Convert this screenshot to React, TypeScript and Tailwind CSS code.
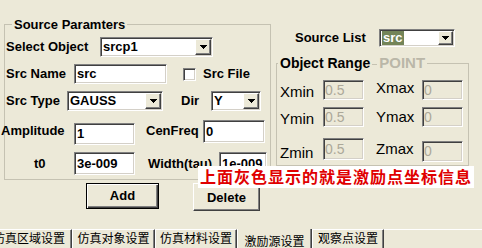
const sunken =
  "border border-t-[#808080] border-l-[#808080] border-r-white border-b-white shadow-[inset_1px_1px_0_#404040,inset_-1px_-1px_0_#d4d0c8]";
const raised =
  "border border-t-white border-l-white border-r-[#404040] border-b-[#404040] shadow-[inset_-1px_-1px_0_#808080]";

function Arrow() {
  return (
    <svg width="7" height="4" viewBox="0 0 7 4">
      <path d="M0 0h7v1h-1v1h-1v1h-1v1h-1v-1h-1v-1h-1v-1h-1z" fill="#000" />
    </svg>
  );
}

function Combo({ value, className = "", selected = false, btn = "w-[16px]" }: { value: string; className?: string; selected?: boolean; btn?: string }) {
  return (
    <div className={`${sunken} bg-white flex p-[1px] ${className}`}>
      <div className="flex-1 flex items-center pl-[1px] overflow-hidden whitespace-nowrap">
        {selected ? <span className="bg-[#738458] text-white px-[1px] leading-[14px]">{value}</span> : value}
      </div>
      <div className={`${raised} bg-[#ece9d8] ${btn} flex items-center justify-center`}>
        <Arrow />
      </div>
    </div>
  );
}

function TextBox({ value, className = "", disabled = false }: { value: string; className?: string; disabled?: boolean }) {
  return (
    <div
      className={`${sunken} ${
        disabled ? "bg-[#ece9d8] text-[#aca899] font-normal text-[14px] pl-[1px]" : "bg-white pl-[2px]"
      } flex items-center overflow-hidden whitespace-nowrap ${className}`}
    >
      {value}
    </div>
  );
}

function RangeLabel({ text, className = "" }: { text: string; className?: string }) {
  return <span className={`text-[15px] font-normal leading-[17px] ${className}`}>{text}</span>;
}

export default function App() {
  return (
    <div className="w-[482px] h-[248px] bg-[#ece9d8] relative overflow-hidden flex flex-col font-['Liberation_Sans','Noto_Sans_CJK_SC',Arial,sans-serif] text-[13px] font-bold text-black">
      <div className="h-[229px] flex">
        {/* left column */}
        <div className="ml-[4px] mt-[17px] w-[267px] flex flex-col">
          <fieldset className="border border-[#c5c2b2] m-0 p-0 pb-[4px] min-w-0">
            <legend className="ml-[7px] px-[2px] leading-[15px]">Source Paramters</legend>

            <div className="flex items-center h-[20px] mt-[5px]">
              <span className="w-[95px] pl-[1px] mb-[1px]">Select Object</span>
              <Combo value="srcp1" className="w-[113px] h-[20px]" />
            </div>

            <div className="flex items-center h-[20px] mt-[7px]">
              <span className="w-[69px] pl-[1px] mb-[1px]">Src Name</span>
              <TextBox value="src" className="w-[93px] h-[20px]" />
              <div className={`${sunken} bg-white w-[13px] h-[13px] ml-[16px]`} />
              <span className="ml-[7px] mb-[1px]">Src File</span>
            </div>

            <div className="flex items-center h-[20px] mt-[7px]">
              <span className="w-[62px] pl-[1px] mb-[1px]">Src Type</span>
              <Combo value="GAUSS" className="w-[96px] h-[20px]" />
              <span className="ml-[18px] w-[30px] mb-[1px]">Dir</span>
              <Combo value="Y" className="w-[50px] h-[20px]" />
            </div>

            <div className="flex items-center h-[25px] mt-[9px]">
              <span className="ml-[-4px] w-[73px] mb-[3px]">Amplitude</span>
              <TextBox value="1" className="self-end w-[61px] h-[22px]" />
              <span className="ml-[11px] w-[57px] mb-[3px]">CenFreq</span>
              <TextBox value="0" className="self-start w-[62px] h-[23px]" />
            </div>

            <div className="flex items-center h-[23px] mt-[7px]">
              <span className="w-[69px] pl-[29px]">t0</span>
              <TextBox value="3e-009" className="w-[61px] h-[23px]" />
              <span className="ml-[13px] w-[71px] whitespace-nowrap">Width(tau)</span>
              <TextBox value="1e-009" className="w-[48px] h-[23px]" />
            </div>
          </fieldset>

          <div className="flex items-start mt-[3px]">
            <button className="ml-[82px] w-[73px] h-[26px] bg-[#ece9d8] border border-black shadow-[inset_1px_1px_0_#fff,inset_-1px_-1px_0_#404040,inset_-2px_-2px_0_#808080] font-bold">
              Add
            </button>
            <button className={`ml-[34px] w-[67px] h-[28px] bg-[#ece9d8] ${raised} font-bold pt-[2px]`}>Delete</button>
          </div>
        </div>

        {/* right column */}
        <div className="ml-[5px] w-[193px] flex flex-col">
          <div className="flex items-center h-[18px] mt-[29px]">
            <span className="w-[103px] pl-[19px]">Source List</span>
            <Combo value="src" selected className="w-[76px] h-[18px]" btn="w-[15px]" />
          </div>

          <fieldset className="border border-[#c5c2b2] m-0 p-0 pb-[3px] mt-[8px] min-w-0">
            <legend className="ml-[1px] px-[2px] leading-[16px] text-[14px]">
              <span>Object Range</span>
              <span className="inline-block w-[5px] h-px bg-[#c5c2b2] mx-[2px] align-middle" />
              <span className="text-[15px] text-[#bab7a8]">POINT</span>
            </legend>

            <div className="flex items-start h-[20px] mt-[9px]">
              <RangeLabel text="Xmin" className="w-[46px] pl-[3px] mt-[3px]" />
              <TextBox value="0.5" disabled className="w-[41px] h-[20px]" />
              <RangeLabel text="Xmax" className="ml-[12px] w-[46px] mt-[-1px]" />
              <TextBox value="0" disabled className="w-[41px] h-[20px]" />
            </div>

            <div className="flex items-start h-[20px] mt-[7px]">
              <RangeLabel text="Ymin" className="w-[46px] pl-[3px] mt-[3px]" />
              <TextBox value="0.5" disabled className="w-[41px] h-[20px]" />
              <RangeLabel text="Ymax" className="ml-[12px] w-[46px] mt-[1px]" />
              <TextBox value="0" disabled className="w-[41px] h-[20px]" />
            </div>

            <div className="flex items-start mt-[11px]">
              <RangeLabel text="Zmin" className="w-[46px] pl-[3px] mt-[6px]" />
              <TextBox value="0.5" disabled className="w-[41px] h-[22px]" />
              <RangeLabel text="Zmax" className="ml-[12px] w-[46px] mt-[2px]" />
              <TextBox value="0" disabled className="w-[41px] h-[21px] mt-[3px]" />
            </div>
          </fieldset>
        </div>
      </div>

      {/* tabs along the bottom */}
      <div className="h-[19px] flex items-stretch font-normal text-[12px] font-['Noto_Sans_CJK_SC',sans-serif]">
        <div className="w-[72px] flex items-center justify-end pr-[6px] pb-[2px] overflow-hidden whitespace-nowrap leading-[16px] border-t border-t-white border-r border-r-[#404040] shadow-[inset_-1px_0_0_#808080]">
          仿真区域设置
        </div>
        <div className="w-[83px] flex items-center justify-center pb-[2px] whitespace-nowrap leading-[16px] border-t border-t-white border-l border-l-white border-r border-r-[#404040] shadow-[inset_-1px_0_0_#808080]">
          仿真对象设置
        </div>
        <div className="w-[82px] flex items-center justify-center pb-[2px] whitespace-nowrap leading-[16px] border-t border-t-white border-l border-l-white border-r border-r-[#404040] shadow-[inset_-1px_0_0_#808080]">
          仿真材料设置
        </div>
        <div className="w-[75px] flex items-start justify-center pt-[4px] whitespace-nowrap leading-[16px] border-l border-l-white border-r border-r-[#404040] shadow-[inset_-1px_0_0_#808080]">
          激励源设置
        </div>
        <div className="w-[72px] flex items-center justify-center pb-[2px] whitespace-nowrap leading-[16px] border-t border-t-white border-l border-l-white border-r border-r-[#404040] shadow-[inset_-1px_0_0_#808080]">
          观察点设置
        </div>
        <div className="flex-1 border-t border-t-white" />
      </div>

      {/* red note laid over the dialog */}
      <div className="absolute left-[198px] top-[166px] w-[276px] h-[22px] bg-white pl-[2px] text-[#e00000] text-[16px] font-bold tracking-[1px] leading-[21px] whitespace-nowrap font-['Noto_Sans_CJK_SC',sans-serif]">
        上面灰色显示的就是激励点坐标信息
      </div>
    </div>
  );
}
